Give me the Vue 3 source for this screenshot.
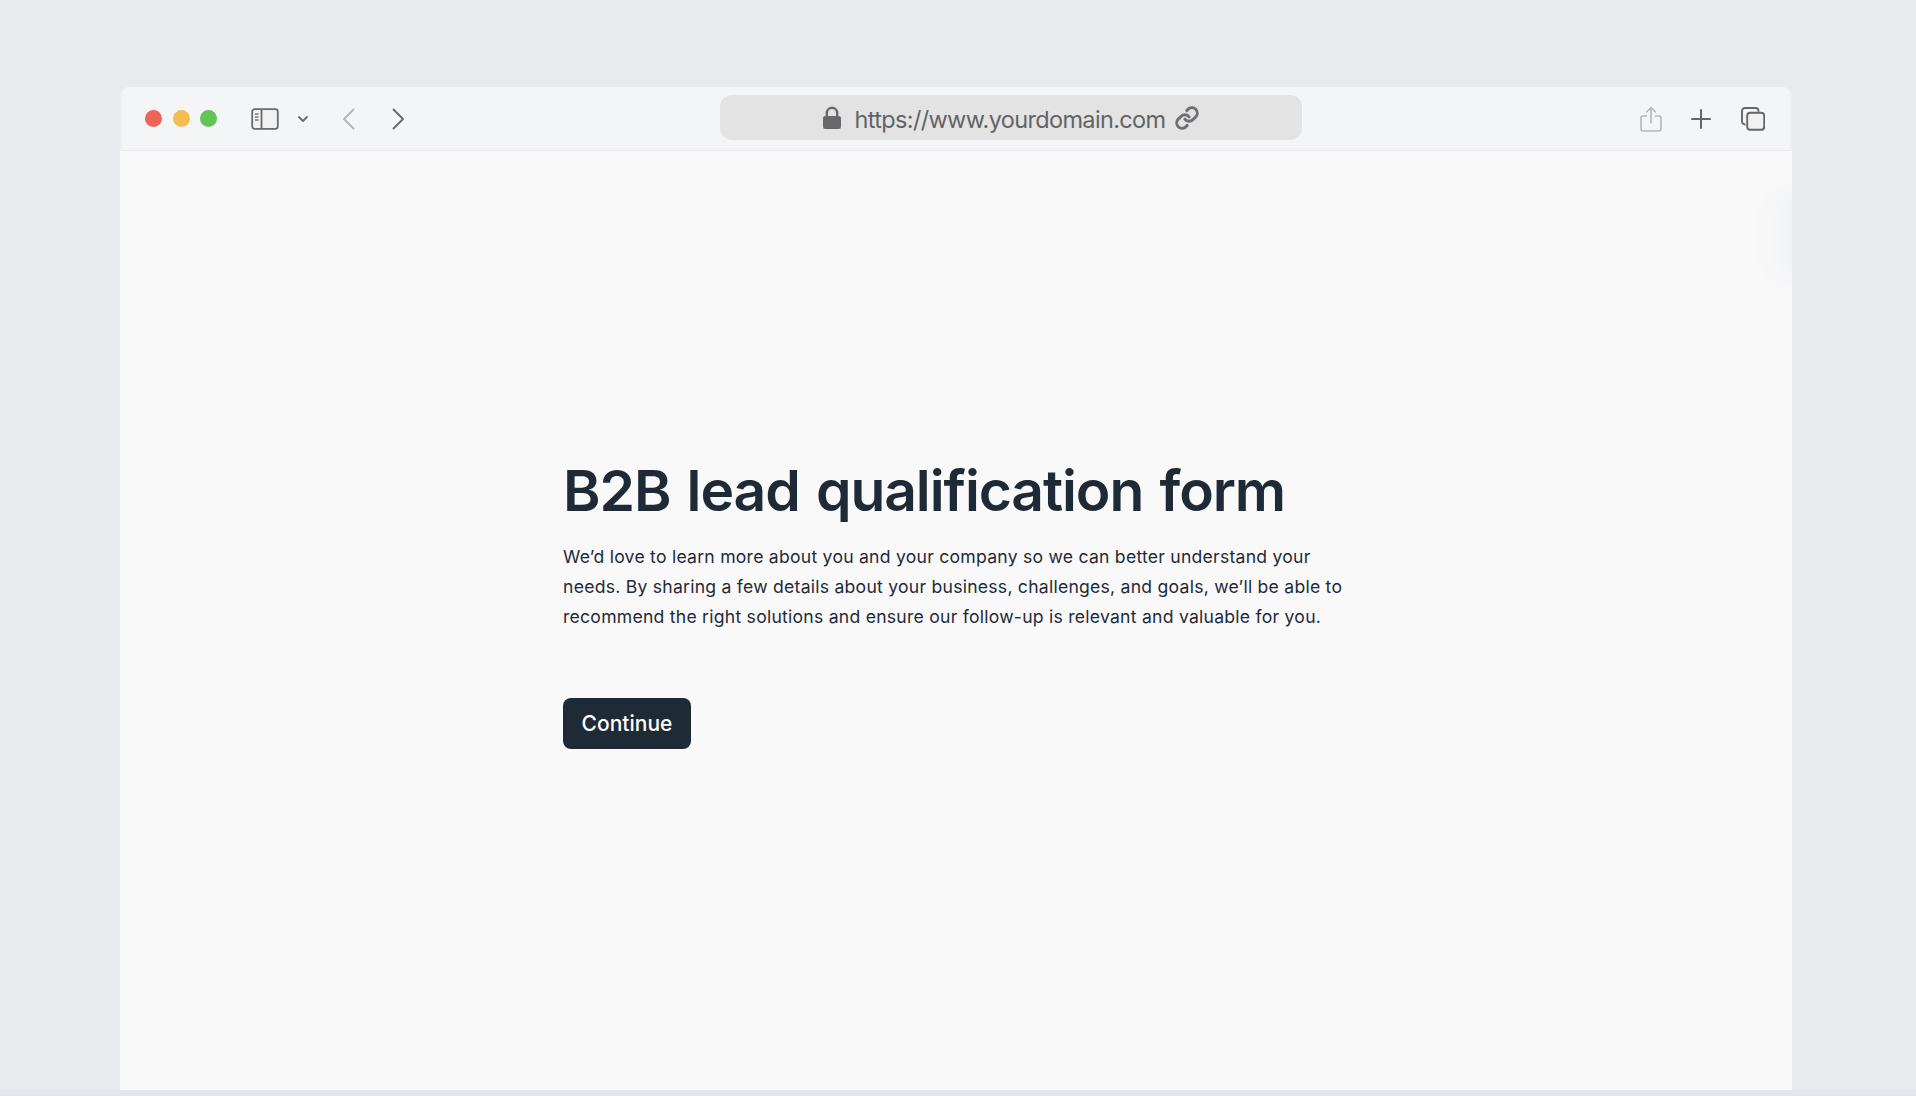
<template>
  <div class="page">
    <div class="window">
      <header class="toolbar">
        <div class="toolbar__left">
          <div class="lights">
            <span class="light light--red"></span>
            <span class="light light--yellow"></span>
            <span class="light light--green"></span>
          </div>
          <svg class="icon sidebar-icon" width="28" height="22" viewBox="0 0 28 22" fill="none">
            <rect x="1.2" y="1.2" width="25.6" height="19.6" rx="2.5" stroke="#6a6a6d" stroke-width="1.8" fill="#f1f1f2" />
            <path d="M10.5 1.5v19" stroke="#6a6a6d" stroke-width="1.8" />
            <path d="M4 6h3.5M4 9h3.5M4 12h3.5" stroke="#77777a" stroke-width="1.5" />
          </svg>
          <svg class="icon chevron-icon" width="12" height="8" viewBox="0 0 12 8" fill="none">
            <path d="M2 2l4 4 4-4" stroke="#6a6a6d" stroke-width="1.8" stroke-linecap="round" stroke-linejoin="round" />
          </svg>
          <svg class="icon back-icon" width="13" height="22" viewBox="0 0 13 22" fill="none">
            <path d="M11.5 1.5L2 11l9.5 9.5" stroke="#b4b4b6" stroke-width="1.9" stroke-linecap="round" stroke-linejoin="round" />
          </svg>
          <svg class="icon forward-icon" width="13" height="22" viewBox="0 0 13 22" fill="none">
            <path d="M1.5 1.5L11 11l-9.5 9.5" stroke="#6a6a6d" stroke-width="1.9" stroke-linecap="round" stroke-linejoin="round" />
          </svg>
        </div>

        <div class="address">
          <svg class="lock" width="20" height="24" viewBox="0 0 20 24" fill="none">
            <path d="M4.8 11V7a5.2 5.2 0 0 1 10.4 0v4" stroke="#69696c" stroke-width="2.4" />
            <rect x="1" y="10" width="18" height="13" rx="2.2" fill="#69696c" />
          </svg>
          <span class="address__url">https://www.yourdomain.com</span>
          <svg class="link" width="26" height="26" viewBox="0 0 24 24" fill="none">
            <path d="M10 13a5 5 0 0 0 7.5.5l3-3a5 5 0 0 0-7-7l-1.7 1.7" stroke="#707073" stroke-width="2.7" stroke-linecap="round" stroke-linejoin="round" />
            <path d="M14 11a5 5 0 0 0-7.5-.5l-3 3a5 5 0 0 0 7 7l1.7-1.7" stroke="#707073" stroke-width="2.7" stroke-linecap="round" stroke-linejoin="round" />
          </svg>
        </div>

        <div class="toolbar__right">
          <svg class="icon" width="22" height="26" viewBox="0 0 22 26" fill="none">
            <path d="M7 10H3a2 2 0 0 0-2 2v11a2 2 0 0 0 2 2h16a2 2 0 0 0 2-2V12a2 2 0 0 0-2-2h-4" stroke="#b6b6b8" stroke-width="1.6" />
            <path d="M11 17V1.5M6.5 6L11 1.5 15.5 6" stroke="#b6b6b8" stroke-width="1.6" stroke-linecap="round" stroke-linejoin="round" />
          </svg>
          <svg class="icon plus-icon" width="20" height="20" viewBox="0 0 20 20" fill="none">
            <path d="M10 1v18M1 10h18" stroke="#666669" stroke-width="2" stroke-linecap="round" />
          </svg>
          <svg class="icon" width="24" height="24" viewBox="0 0 24 24" fill="none">
            <path d="M4.5 17.5H4a3 3 0 0 1-3-3V4a3 3 0 0 1 3-3h10.5a3 3 0 0 1 3 3v.8" stroke="#666669" stroke-width="1.9" />
            <rect x="6.2" y="5.8" width="17" height="17" rx="3" stroke="#666669" stroke-width="1.9" fill="#f1f1f2" />
          </svg>
        </div>
      </header>

      <main class="content">
        <div class="edge-shadow"></div>
        <h1 class="content__title">B2B lead qualification form</h1>
        <p class="content__text">
          We’d love to learn more about you and your company so we can better understand your<br />
          needs. By sharing a few details about your business, challenges, and goals, we’ll be able to<br />
          recommend the right solutions and ensure our follow-up is relevant and valuable for you.
        </p>
        <button class="content__button" type="button">Continue</button>
      </main>
    </div>
  </div>
</template>

<script setup>
</script>

<style>
html,
body {
  margin: 0;
  background: #e9eaee;
}
</style>

<style scoped>
.page {
  height: 1096px;
  box-sizing: border-box;
  padding: 87px 124px 0 120px;
  background: #e9eaee;
  border-bottom: 6px solid #e4e6eb;
  overflow: hidden;
  font-family: Inter, "Liberation Sans", sans-serif;
}

.window {
  height: 100%;
  display: flex;
  flex-direction: column;
  background: #f9f9fa;
  border-radius: 10px 10px 0 0;
  overflow: hidden;
}

.toolbar {
  height: 64px;
  flex: none;
  box-sizing: border-box;
  display: grid;
  grid-template-columns: 598px 582px 1fr;
  background: #f4f5f7;
  border-bottom: 1px solid #ececee;
  border-left: 2px solid #eeeff2;
  border-right: 2px solid #eeeff2;
  padding-top: 8px;
}

.toolbar__left {
  display: flex;
  align-items: center;
  padding-left: 23px;
  height: 45px;
  margin-top: 1px;
}

.lights {
  display: flex;
  gap: 10.5px;
}

.light {
  width: 17px;
  height: 17px;
  border-radius: 50%;
}

.light--red {
  background: #ec6559;
}

.light--yellow {
  background: #f4bd4f;
}

.light--green {
  background: #61c454;
}

.icon {
  display: block;
  flex: none;
}

.sidebar-icon {
  margin-left: 34px;
}

.chevron-icon {
  margin-left: 18px;
}

.back-icon {
  margin-left: 33px;
}

.forward-icon {
  margin-left: 37px;
}

.plus-icon {
  margin-right: 1px;
}

.address {
  height: 45px;
  border-radius: 12px;
  background: #e3e3e4;
  display: flex;
  align-items: center;
  justify-content: center;
  gap: 10px;
  color: #636366;
}

.address__url {
  font-size: 23.5px;
  letter-spacing: -0.65px;
  white-space: nowrap;
  padding-top: 3px;
}

.lock {
  margin-right: 3px;
}

.link {
  margin-left: -1px;
}

.toolbar__right {
  display: flex;
  align-items: center;
  justify-content: flex-end;
  gap: 29px;
  height: 45px;
  margin-top: 1px;
  padding-right: 25px;
}

.content {
  flex: 1;
  position: relative;
  padding: 304px 0 0 443px;
  color: #1f2a37;
}

.edge-shadow {
  position: absolute;
  top: 42px;
  right: -36px;
  width: 50px;
  height: 84px;
  background: #f0f1f2;
  filter: blur(14px);
}

.content__title {
  margin: 0;
  font-size: 57px;
  line-height: 72px;
  font-weight: 600;
  letter-spacing: -1.1px;
  word-spacing: 3px;
  white-space: nowrap;
}

.content__text {
  margin: 15px 0 0;
  font-size: 17.6px;
  line-height: 30px;
  letter-spacing: 0.24px;
  white-space: nowrap;
  color: #1f2a37;
}

.content__button {
  display: block;
  margin-top: 66px;
  width: 128px;
  height: 51px;
  border: none;
  border-radius: 8px;
  background: #1f2a37;
  color: #ffffff;
  font-family: inherit;
  font-size: 21px;
  font-weight: 500;
  padding: 0;
}
</style>
